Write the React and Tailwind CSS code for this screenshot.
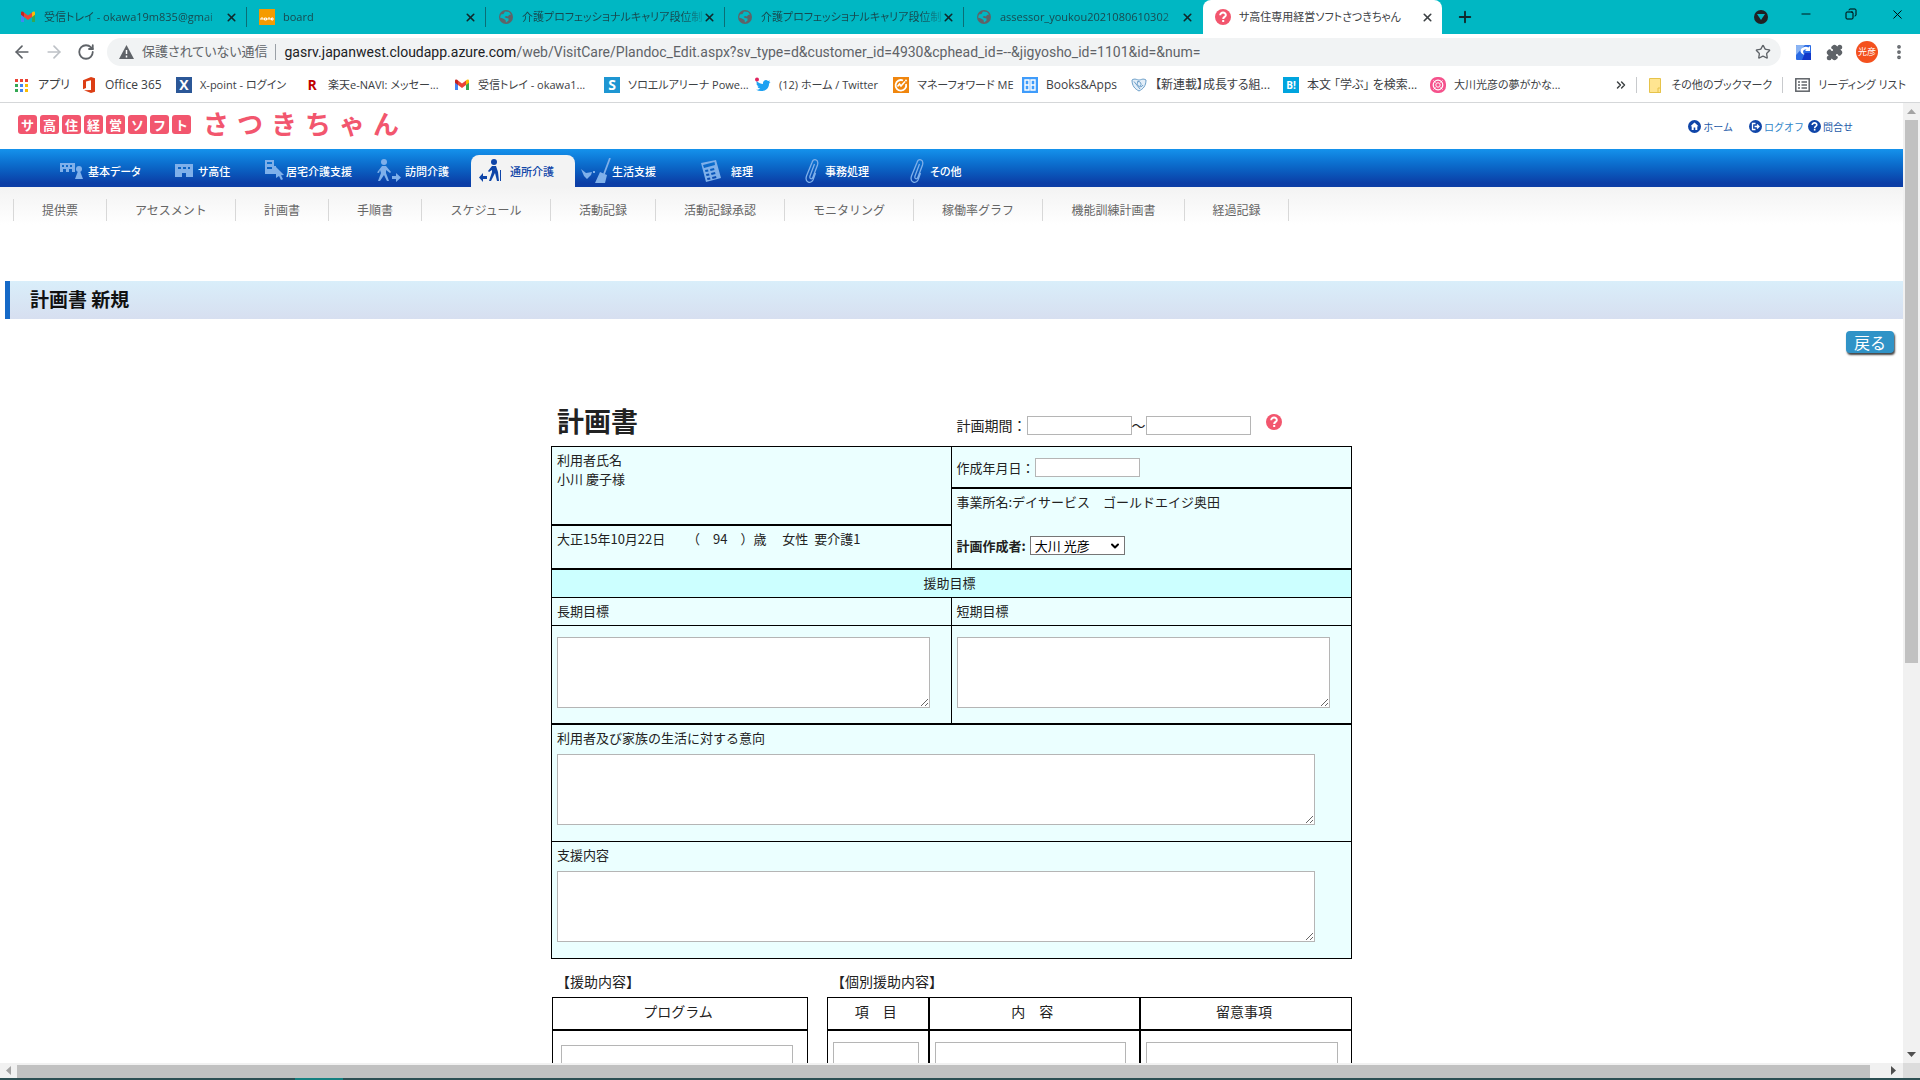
import React from 'react';
import {
  ArrowLeft, ArrowRight, RotateCw, X, Plus, Star, Puzzle, MoreVertical, Minus, Copy, ChevronsRight, ChevronDown,
} from 'lucide-react';

const svg = 'block shrink-0';

function Gmail() {
  return (
    <svg className={svg} width="16" height="16" viewBox="0 0 16 16" aria-hidden="true">
      <path d="M1 4v9h3V7z" fill="#4285f4" />
      <path d="M12 7v6h3V4z" fill="#34a853" />
      <path d="M12 3.600V8l3-2.200V4c0-1.600-1.800-2-3-.4z" fill="#fbbc04" />
      <path d="M4 3.600 8 6.600l4-3V8l-4 3-4-3z" fill="#ea4335" />
      <path d="M1 4v1.800L4 8V3.600C2.800 2 1 2.400 1 4z" fill="#c5221f" />
    </svg>
  );
}
function Globe() {
  return (
    <svg className={svg} width="16" height="16" viewBox="0 0 16 16" aria-hidden="true">
      <circle cx="8" cy="8" r="7" fill="#5f6368" />
      <path d="M7 2.500 11 3l2 2.500-2 .5-1 1.500-2-.5-1.500 1 1.500 1 2.500.5v2L8 13.500 7.500 11 5 9.500 2 8.500 3 5.500l2.500-.5z" fill="#00b7c3" />
    </svg>
  );
}
function Help({ size = 16, fill = '#f2566e' }) {
  return (
    <svg className={svg} width={size} height={size} viewBox="0 0 16 16" aria-hidden="true">
      <circle cx="8" cy="8" r="8" fill={fill} />
      <path d="M5.200 6.200C5.200 2.600 11 2.800 10.800 6.200 10.700 8 8.200 7.800 8.200 10" fill="none" stroke="#fff" strokeWidth="2" />
      <rect x="7.200" y="11" width="2" height="2" fill="#fff" />
    </svg>
  );
}
function Board() {
  return (
    <svg className={svg} width="16" height="16" viewBox="0 0 16 16" aria-hidden="true">
      <rect width="16" height="16" fill="#f59b00" />
      <path d="M2 11V9h2v2M5.500 9h2v2h-2zM9 11V9h2v2M12.500 9H14v2h-1.500z" fill="none" stroke="#fff" />
    </svg>
  );
}
function Apps() {
  const colors = ['#ea4335', '#ea4335', '#ea4335', '#34a853', '#4285f4', '#fbbc04', '#34a853', '#4285f4', '#fbbc04'];
  return (
    <svg className={svg} width="16" height="16" viewBox="0 0 16 16" aria-hidden="true">
      {colors.map((c, i) => (
        <rect key={i} x={1 + (i % 3) * 5} y={2 + Math.floor(i / 3) * 5} width="3" height="3" fill={c} />
      ))}
    </svg>
  );
}
function Office() {
  return (
    <svg className={svg} width="16" height="16" viewBox="0 0 16 16" aria-hidden="true">
      <path d="M10 0 2 3.200v9L5 11V4.500l5-1.300V13l-7 .2L10 16l4-1.200V1.300z" fill="#dc3e15" />
    </svg>
  );
}
function Tile({ bg, fg = 'text-white', children }) {
  return <span className={`flex size-4 shrink-0 items-center justify-center text-[14px] leading-4 font-bold ${bg} ${fg}`} aria-hidden="true">{children}</span>;
}
function Twitter() {
  return (
    <svg className={svg} width="16" height="16" viewBox="0 0 16 16" aria-hidden="true">
      <path d="M1.500 4C3.500 6 6 7 8 7c-.6-3.200 3-5.200 5-3l2-.6-1 1.800 1.500-.2-1.500 1.700c.2 6.300-7 9.300-13 6.100 2 0 3.300-.5 4.300-1.300-1.600 0-2.500-1-2.800-2h1.300C2 8.800 1.500 7.500 1.500 6.300l1.200.3C1.400 5.800 1.200 5 1.500 4z" fill="#1da1f2" />
      <circle cx="2" cy="2.500" r="2" fill="#e0245e" />
    </svg>
  );
}
function MoneyForward() {
  return (
    <svg className={svg} width="16" height="16" viewBox="0 0 16 16" aria-hidden="true">
      <rect width="16" height="16" fill="#f0860e" />
      <path d="M10 3.500A5.300 5.300 0 1 0 13 7" fill="none" stroke="#fff" strokeWidth="1.800" />
      <path d="m4.500 9.500 2-2.500L8 9l4-4.500" fill="none" stroke="#fff" strokeWidth="1.600" />
      <circle cx="13" cy="3.500" r="1" fill="#fff" />
    </svg>
  );
}
function Books() {
  return (
    <svg className={svg} width="16" height="16" viewBox="0 0 16 16" aria-hidden="true">
      <rect width="16" height="16" fill="#3f9cfb" />
      <path d="M3 3h4v10H3zM9 3h4v10H9zM3 8h4M9 8h4" fill="none" stroke="#fff" strokeWidth="1.400" />
    </svg>
  );
}
function Shield() {
  return (
    <svg className={svg} width="16" height="16" viewBox="0 0 16 16" aria-hidden="true">
      <path d="M1 3c3-2 5 0 7 0s4-2 7 0c0 6-3 9-7 11C4 12 1 9 1 3z" fill="#e3eef8" stroke="#6c9fc9" />
      <path d="M3 4.500 9 12M8 4a3 3 0 1 0 4 4M6 5a2.500 2.500 0 1 1 3 4" fill="none" stroke="#6c9fc9" />
    </svg>
  );
}
function Rose() {
  return (
    <svg className={svg} width="16" height="16" viewBox="0 0 16 16" aria-hidden="true">
      <rect width="16" height="16" rx="7" fill="#f5528c" />
      <circle cx="8" cy="8" r="4.800" fill="none" stroke="#fff" strokeWidth="1.200" />
      <circle cx="8" cy="8" r="2.200" fill="none" stroke="#fff" />
      <path d="M3.500 3.500l2 2M12.500 3.500l-2 2M3.500 12.500l2-2M12.500 12.500l-2-2" stroke="#fff" />
    </svg>
  );
}

const tabs = [
  { icon: <Gmail />, label: '受信トレイ - okawa19m835@gmai' },
  { icon: <Board />, label: 'board' },
  { icon: <Globe />, label: '介護プロフェッショナルキャリア段位制' },
  { icon: <Globe />, label: '介護プロフェッショナルキャリア段位制' },
  { icon: <Globe />, label: 'assessor_youkou2021080610302' },
  { icon: <Help />, label: 'サ高住専用経営ソフトさつきちゃん', active: true },
];

function TabStrip() {
  return (
    <div className="flex h-[34px] shrink-0 items-stretch bg-[#00b7c3] pl-2 text-[11px] text-[#174a50]">
      {tabs.map((t, i) => (
        <div
          key={i}
          className={
            t.active
              ? 'flex w-[239px] items-center rounded-t-lg bg-white pr-2 pl-3 text-[#3c4043]'
              : 'flex w-[239px] items-center pl-3'
          }
        >
          {t.icon}
          <span className={t.active ? 'ml-2 flex-1 whitespace-nowrap' : 'ml-2 flex-1 [mask-image:linear-gradient(to_right,#000_88%,#0004)] whitespace-nowrap'}>{t.label}</span>
          <button aria-label="タブを閉じる" className={t.active ? 'text-[#3c4043]' : 'mr-2 text-[#10282b]'}>
            <X size={13} strokeWidth={3} />
          </button>
          {!t.active && <span className={i === 4 ? 'h-5 w-px' : 'h-5 w-px bg-[#0b6e76]'} />}
        </div>
      ))}
      <button aria-label="新しいタブ" className="ml-3.5 text-[#10282b]">
        <Plus size={18} strokeWidth={2.500} />
      </button>
      <div className="ml-auto flex items-center pb-1.5 text-black">
        <button aria-label="タブを検索" className="mt-1.5 flex size-3.5 items-center justify-center rounded-full bg-[#202124]">
          <svg width="8" height="6" viewBox="0 0 8 6" aria-hidden="true"><path d="M0 0h8L4 6z" fill="#00b7c3" /></svg>
        </button>
        <button aria-label="最小化" className="ml-[31px]"><Minus size={14} strokeWidth={1.500} /></button>
        <button aria-label="元に戻す" className="ml-8"><Copy size={12} strokeWidth={2} className="-scale-x-100" /></button>
        <button aria-label="閉じる" className="mr-[15px] ml-[33px]"><X size={15} strokeWidth={1.500} /></button>
      </div>
    </div>
  );
}

function Toolbar() {
  return (
    <div className="flex h-9 shrink-0 items-center bg-white pl-3 text-[#5f6368]">
      <button aria-label="戻る"><ArrowLeft size={20} /></button>
      <button aria-label="進む" className="ml-3 text-[#bdc1c6]"><ArrowRight size={20} /></button>
      <button aria-label="再読み込み" className="ml-[13px]"><RotateCw size={18} strokeWidth={2.400} /></button>
      <div className="ml-3 flex h-7 flex-1 items-center rounded-full bg-[#f1f3f4] pr-2.5 pl-3">
        <svg width="15" height="14" viewBox="0 0 15 14" aria-hidden="true">
          <path d="M7.500 0 15 14H0z" fill="#5f6368" />
          <path d="M7.500 5v4M7.500 10.500v2" stroke="#fff" strokeWidth="1.500" />
        </svg>
        <span className="ml-2 text-[13px] whitespace-nowrap">保護されていない通信</span>
        <span className="ml-2 h-4 w-px bg-[#9aa0a6]" />
        <div role="textbox" aria-label="アドレス" tabIndex={0} className="ml-2 flex-1 font-['Roboto',sans-serif] text-[14px] whitespace-nowrap">
          <span className="text-[#202124]">gasrv.japanwest.cloudapp.azure.com</span>
          /web/VisitCare/Plandoc_Edit.aspx?sv_type=d&amp;customer_id=4930&amp;cphead_id=--&amp;jigyosho_id=1101&amp;id=&amp;num=
        </div>
        <button aria-label="ブックマークに追加"><Star size={16} /></button>
      </div>
      <div className="ml-[15px] flex items-center pr-3">
        <svg width="15" height="15" viewBox="0 0 15 15" aria-hidden="true">
          <rect width="15" height="15" rx="1" fill="#2b6be4" />
          <path d="M0 1a1 1 0 0 1 1-1h8L0 10z" fill="#8bb4f3" />
          <path d="M14 1v5H9l1.500-1.500C7 4.500 6 6 8.500 10 4 8.500 3 4.500 7 2.500c2-1 4-.8 5.500 0z" fill="#fff" />
          <path d="M9 8h6v7H6z" fill="#1238c8" />
        </svg>
        <button aria-label="拡張機能" className="ml-[15px]"><Puzzle size={17} fill="currentColor" /></button>
        <button className="ml-[13px] flex size-[22px] items-center justify-center rounded-full bg-[#f4511e] text-[9px] text-white">光彦</button>
        <button aria-label="メニュー" className="ml-3"><MoreVertical size={18} strokeWidth={3} /></button>
      </div>
    </div>
  );
}

const bookmarks = [
  [<Apps />, 'アプリ', 'w-[67px]'],
  [<Office />, 'Office 365', 'w-[95px]'],
  [<Tile bg="bg-[#2b5797]">X</Tile>, 'X-point - ログイン', 'w-[128px] text-[11px]'],
  [<Tile bg="bg-white" fg="text-[#bf0000]">R</Tile>, '楽天e-NAVI: メッセー...', 'w-[150px] text-[11px]'],
  [<Gmail />, '受信トレイ - okawa1...', 'w-[150px] text-[11px]'],
  [<Tile bg="bg-[#1e96d2]">S</Tile>, 'ソロエルアリーナ Powe...', 'w-[151px] text-[11px]'],
  [<Twitter />, '(12) ホーム / Twitter', 'w-[138px] text-[11px]'],
  [<MoneyForward />, 'マネーフォワード ME', 'w-[129px] text-[11px]'],
  [<Books />, 'Books&Apps', 'w-[109px]'],
  [<Shield />, '【新連載】成長する組...', 'w-[152px]'],
  [<Tile bg="bg-[#00a4de]"><span className="text-[10px]">B!</span></Tile>, '本文 「学ぶ」 を検索...', 'w-[147px]'],
  [<Rose />, '大川光彦の夢がかな...', 'w-[134px] text-[11px]'],
];

function Bookmarks() {
  return (
    <div className="flex h-[33px] shrink-0 items-center border-b border-[#d5d7d9] bg-white pr-3.5 pb-0.5 pl-3.5 text-[12px] whitespace-nowrap text-[#3c4043]">
      {bookmarks.map(([icon, label, w], i) => (
        <a key={i} href="#" className={`flex shrink-0 items-center gap-2 ${w}`}>
          {icon}
          {label}
        </a>
      ))}
      <button aria-label="その他" className="ml-auto"><ChevronsRight size={14} strokeWidth={2.500} /></button>
      <span className="ml-2 h-4 w-px bg-[#c8cacd]" />
      <a href="#" className="ml-3 flex items-center gap-2.5 text-[11px]">
        <svg width="12" height="15" viewBox="0 0 12 15" aria-hidden="true">
          <path d="M.5.500h11v14H.5z" fill="#ffe591" stroke="#e6c34a" />
          <path d="M9 10v4.500h2.500V10z" fill="#ffe591" stroke="#e6c34a" />
        </svg>
        その他のブックマーク
      </a>
      <span className="ml-2.5 h-4 w-px bg-[#c8cacd]" />
      <button className="ml-3 flex items-center gap-2 text-[11px]">
        <svg width="15" height="14" viewBox="0 0 15 14" fill="none" stroke="#5f6368" strokeWidth="1.500" aria-hidden="true">
          <rect x=".8" y=".8" width="13.400" height="12.400" />
          <path d="M3 4h2M6.500 4H12M3 7h2M6.500 7H12M3 10h2M6.500 10H12" />
        </svg>
        リーディング リスト
      </button>
    </div>
  );
}

function SiteHeader() {
  return (
    <header className="flex h-[46px] items-start justify-between pt-2 pr-[50px] pl-[18px]">
      <a href="#" className="flex items-center text-[#f2566e]">
        <span className="flex gap-[3px] pt-0.5">
          {[...'サ高住経営ソフト'].map((c, i) => (
            <span key={i} className="flex size-[19px] items-center justify-center rounded-[3px] bg-[#f2566e] text-[13px] leading-none font-bold text-white">{c}</span>
          ))}
        </span>
        <span className="ml-2 flex text-[26px] leading-6 font-bold">
          {[...'さつきちゃん'].map((c, i) => (
            <span key={i} className="w-[34px] text-center">{c}</span>
          ))}
        </span>
      </a>
      <div className="flex items-center pt-2 text-[10px] text-[#1c5aa8]">
        <a href="#" className="flex items-center gap-0.5">
          <svg width="13" height="13" viewBox="0 0 13 13" aria-hidden="true"><circle cx="6.500" cy="6.500" r="6.500" fill="#0f45a8" /><path d="M6.500 2.500 2.500 6.300h1.200v3.700h2V7.500h1.600V10h2V6.300h1.200z" fill="#fff" /></svg>
          ホーム
        </a>
        <a href="#" className="ml-4 flex items-center gap-0.5 text-[#2f86c9]">
          <svg width="13" height="13" viewBox="0 0 13 13" aria-hidden="true"><circle cx="6.500" cy="6.500" r="6.500" fill="#0f45a8" /><path d="M6.500 3.500h-3v6h3M5.500 6.500H10M8 4.500l2 2-2 2" fill="none" stroke="#fff" strokeWidth="1.300" /></svg>
          ログオフ
        </a>
        <a href="#" className="ml-1 flex items-center gap-0.5">
          <Help size={13} fill="#0f45a8" />
          問合せ
        </a>
      </div>
    </header>
  );
}

function NavIcon({ w = 24, children }) {
  return <svg className={svg} width={w} height="26" viewBox={`0 0 ${w} 26`} fill="currentColor" aria-hidden="true">{children}</svg>;
}
const clip = <path d="M10.500 6 6 18c-.8 3 2 4 3 1l4.500-12c1.500-6-4-7-5.500-2.500L2.500 18c-2 7 4.500 8 6.500 4l2.500-7" fill="none" stroke="currentColor" strokeWidth="1.300" />;

const nav = [
  ['基本データ', 'w-[115px]', 'w-7', <NavIcon><path fillRule="evenodd" d="M0 5h15v9h-3v-3H9v3H6v-3H3v3H0zM2 7v2h2V7zM6 7v2h2V7zM10 7v2h2V7z" /><circle cx="19" cy="11" r="3" /><path d="M18 13h2l3 8h-8z" /></NavIcon>],
  ['サ高住', 'w-[89px]', 'w-[23px]', <NavIcon w={18}><path fillRule="evenodd" d="M0 6h18v13h-7v-4H7v4H0zM3 9v2h3V9zM8 9v2h3V9zM13 9v2h2V9z" /></NavIcon>],
  ['居宅介護支援', 'w-[113px]', 'w-[22px]', <NavIcon w={20}><path fillRule="evenodd" d="M1 2h9v6h2v8H1zM3 4v2h5V4zM3 9v2h5V9z" /><path d="m12 9 8 8-3 .3 2 4-2 .7-2-4-3 2z" /></NavIcon>],
  ['訪問介護', 'w-[94px]', 'w-7', <NavIcon><circle cx="7" cy="4" r="3" /><path d="M5 8h4l5 6-1 1-4-3v3l3 8h-2L7 17l-4 6H1l3-8-1-3-1 3-2-.5z" /><path d="M15 18h4v-3l5 4.500-5 4.500v-3h-4z" /></NavIcon>],
  ['通所介護', 'w-[104px]', 'w-[31px]', <NavIcon><circle cx="15" cy="4" r="3" /><path d="M13 8h4l2 6 1 9h-2l-2-8-4 8h-2l3-9v-2l-3 2-1-1z" /><path d="M21 12h1v11h-1zM8 18H4v-3l-4 4.500L4 24v-3h4z" /></NavIcon>],
  ['生活支援', 'w-[120px]', 'w-[31px]', <NavIcon w={30}><path d="m0 11 5 4 6-1-1 3-4 4-3-3z" /><path d="m29 0-6 16" fill="none" stroke="currentColor" strokeWidth="1.800" /><path d="m19 14 7 3-2 8H14zM12 13h2v2h-2z" /></NavIcon>],
  ['経理', 'w-[103px]', 'w-[30px]', <NavIcon w={20}><path fillRule="evenodd" d="m0 5 15-3 5 18-15 4zM2 7l1 3 11-3-.5-3zM4 12l.5 2 3-.6-.5-2zM9 11l.5 2 4-1-.5-2zM5 16l.5 2 3-.6-.5-2zM10 15l.5 2 4-1-.5-2zM6 20l.5 2 3-.6-.5-2zM11 19l.5 2 4-1-.5-2z" /></NavIcon>],
  ['事務処理', 'w-[105px]', 'w-[21px]', <NavIcon w={15}>{clip}</NavIcon>],
  ['その他', 'w-[80px]', 'w-[21px]', <NavIcon w={15}>{clip}</NavIcon>],
];

function MainNav() {
  return (
    <nav className="flex h-[38px] items-end bg-linear-to-b from-[#1592ec] to-[#0c3ea6] to-90% pl-[60px] text-[11px] font-medium text-white">
      {nav.map(([label, w, iw, icon], i) => (
        <a
          key={label}
          href="#"
          className={`flex h-8 shrink-0 items-center whitespace-nowrap ${w} ${i === 4 ? 'mr-1.5 rounded-t-lg bg-[#f3f3f3] pl-2 text-[#0f45a8]' : ''}`}
        >
          <span className={`shrink-0 ${iw} ${i === 4 ? '' : 'text-[#7fb0ea]'}`}>{icon}</span>
          {label}
        </a>
      ))}
    </nav>
  );
}

const subnav = [
  ['提供票', 'w-[94px]'], ['アセスメント', 'w-[129px]'], ['計画書', 'w-[93px]'], ['手順書', 'w-[93px]'],
  ['スケジュール', 'w-[129px]'], ['活動記録', 'w-[105px]'], ['活動記録承認', 'w-[129px]'], ['モニタリング', 'w-[129px]'],
  ['稼働率グラフ', 'w-[129px]'], ['機能訓練計画書', 'w-[142px]'], ['経過記録', 'w-[104px]'],
];

function SubNav() {
  return (
    <nav className="flex h-[94px] items-start bg-linear-to-b from-[#f3f3f3] to-white to-40% pt-3 pl-[13px] text-[12px] text-[#666]">
      {subnav.map(([label, w], i) => (
        <a key={label} href="#" className={`flex h-[22px] shrink-0 items-center justify-center border-[#d8d8d8] ${w} ${i === 0 ? 'border-x' : 'border-r'}`}>{label}</a>
      ))}
    </nav>
  );
}

const field = 'block border border-[#b5b5b5] bg-white px-1 text-[13px]';
const cell = 'bg-[#ebffff] px-[5px]';

function PlanForm() {
  return (
    <form className="mx-auto w-[801px] text-[13px] leading-[19px] text-[#222]">
      <div className="grid grid-cols-2 items-end pb-2">
        <h2 className="pb-px pl-1.5 text-[27px] leading-8 font-bold">計画書</h2>
        <div className="flex items-center pb-0.5 pl-[5px] text-[14px]">
          <label htmlFor="from">計画期間：</label>
          <input id="from" className={`${field} h-[19px] w-[105px]`} />
          <label htmlFor="to">～</label>
          <input id="to" className={`${field} h-[19px] w-[105px]`} />
          <button type="button" aria-label="ヘルプ" className="mb-1.5 ml-[15px]"><Help size={16} /></button>
        </div>
      </div>

      <div className="border border-black">
        <div className="grid grid-cols-2 divide-x divide-black border-b-2 border-black">
          <div className="flex flex-col">
            <div className={`${cell} min-h-[79px] border-b-2 border-black pt-[3px]`}>
              <p>利用者氏名</p>
              <p>小川 慶子様</p>
            </div>
            <div className={`${cell} flex-1 pt-[3px] whitespace-pre`}>{'大正15年10月22日\u3000 \u00a0 （\u300094\u3000）歳\u3000 女性\u00a0 要介護1'}</div>
          </div>
          <div className="flex flex-col">
            <div className={`${cell} flex min-h-[42px] items-center border-b-2 border-black`}>
              <label htmlFor="created">作成年月日：</label>
              <input id="created" className={`${field} h-[19px] w-[105px]`} />
            </div>
            <div className={`${cell} flex-1 pt-[3px] pb-[13px]`}>
              <p>事業所名:デイサービス　ゴールドエイジ奥田</p>
              <div className="mt-[25px] flex items-center gap-1">
                <label htmlFor="author" className="font-bold">計画作成者:</label>
                <span className="relative block w-[95px]">
                  <select id="author" className="block h-[19px] w-full appearance-none border border-[#767676] bg-white pl-1 text-[13px] leading-4 text-black">
                    <option>大川 光彦</option>
                  </select>
                  <ChevronDown size={12} strokeWidth={4} className="pointer-events-none absolute top-1 right-1 text-black" />
                </span>
              </div>
            </div>
          </div>
        </div>
        <div className="border-b border-black bg-[#ccffff] pt-[3px] pr-1 pb-[5px] text-center">援助目標</div>
        <div className="grid grid-cols-2 divide-x divide-black border-b-2 border-black">
          {[['long', '長期目標'], ['short', '短期目標']].map(([id, label]) => (
            <div key={id} className="bg-[#ebffff]">
              <label htmlFor={id} className="block border-b border-black px-[5px] pt-[3px] pb-[5px]">{label}</label>
              <div className="pt-[11px] pr-[21px] pb-[15px] pl-[5px]">
                <textarea id={id} className={`${field} h-[71px] w-full`} />
              </div>
            </div>
          ))}
        </div>
        {[['wish', '利用者及び家族の生活に対する意向', 'border-b border-black'], ['support', '支援内容', '']].map(([id, label, line]) => (
          <div key={id} className={`bg-[#ebffff] pt-[3px] pr-9 pb-4 pl-[5px] ${line}`}>
            <label htmlFor={id} className="block">{label}</label>
            <textarea id={id} className={`${field} mt-[7px] h-[71px] w-full`} />
          </div>
        ))}
      </div>

      <div className="flex items-start gap-[19px] pt-3 pl-px text-[14px]">
        <section className="w-[256px]">
          <h3 className="pb-1.5 pl-1 leading-5">【援助内容】</h3>
          <table className="w-full border-collapse border border-black">
            <thead>
              <tr><th className="h-8 border-b-2 border-black pr-1 pb-1 font-normal">プログラム</th></tr>
            </thead>
            <tbody>
              <tr><td className="pt-[14px] pr-3.5 pl-2"><textarea aria-label="プログラム" className={`${field} h-[60px] w-full`} /></td></tr>
            </tbody>
          </table>
        </section>
        <section className="flex-1">
          <h3 className="pb-1.5 pl-1 leading-5">【個別援助内容】</h3>
          <table className="w-full table-fixed border-collapse border border-black">
            <thead>
              <tr className="divide-x-2 divide-black border-b-2 border-black">
                <th className="h-8 w-[101px] pr-1 pb-1 font-normal">項　目</th>
                <th className="pr-1 pb-1 font-normal">内　容</th>
                <th className="pr-1 pb-1 font-normal">留意事項</th>
              </tr>
            </thead>
            <tbody>
              <tr className="divide-x-2 divide-black">
                {['項目', '内容', '留意事項'].map((n, i) => (
                  <td key={n} className={i === 0 ? 'pt-[11px] pr-[9px] pl-[5px]' : 'pt-[11px] pr-[13px] pl-[5px]'}><textarea aria-label={n} className={`${field} h-[60px] w-full`} /></td>
                ))}
              </tr>
            </tbody>
          </table>
        </section>
      </div>
    </form>
  );
}

function Arrow({ d, fill = '#505050', className = '' }) {
  return <svg className={className} width="17" height="17" viewBox="0 0 17 17" aria-hidden="true"><path d={d} fill={fill} /></svg>;
}

export default function App() {
  return (
    <div className="flex h-screen flex-col overflow-hidden bg-white font-['Noto_Sans_CJK_JP',sans-serif]">
      <div className="flex shrink-0 flex-col font-['Open_Sans','Noto_Sans_CJK_JP',sans-serif] [font-feature-settings:'palt']">
        <TabStrip />
        <Toolbar />
        <Bookmarks />
      </div>
      <div className="flex min-h-0 flex-1">
        <main className="min-w-0 flex-1 overflow-hidden">
          <SiteHeader />
          <div className="[font-feature-settings:'palt']"><MainNav /></div>
          <SubNav />
          <h1 className="ml-[5px] flex h-[38px] items-center border-l-[5px] border-[#1569c7] bg-linear-to-b from-[#d9eefa] to-[#d7dff0] pb-0.5 pl-5 text-[19px] font-bold text-[#111]">計画書 新規</h1>
          <div className="flex justify-end pt-3 pr-[9px] pb-[52px]">
            <button className="rounded bg-[#3093c7] px-2 text-[16px] leading-[22px] text-white shadow-[1px_2px_2px_#444]">戻る</button>
          </div>
          <PlanForm />
        </main>
        <div className="flex w-[17px] shrink-0 flex-col items-center bg-[#f1f1f1]">
          <Arrow d="M4 11h9L8.500 6z" fill="#a3a3a3" />
          <div className="h-[543px] w-[13px] bg-[#c1c1c1]" />
          <Arrow className="mt-auto" d="M4 6h9l-4.500 5z" />
        </div>
      </div>
      <div className="flex h-[15px] shrink-0 items-center bg-[#f1f1f1]">
        <Arrow d="M11 4v9L6 8.500z" fill="#a3a3a3" />
        <div className="mt-0.5 h-[13px] flex-1 bg-[#c1c1c1]" />
        <Arrow className="ml-4" d="M5 4v9l5-4.500z" />
        <div className="h-full w-[17px] bg-[#dcdcdc]" />
      </div>
      <div className="h-0.5 shrink-0 bg-[#2d4f53] pl-[295px]"><div className="h-full w-12 bg-[#158080]" /></div>
    </div>
  );
}
